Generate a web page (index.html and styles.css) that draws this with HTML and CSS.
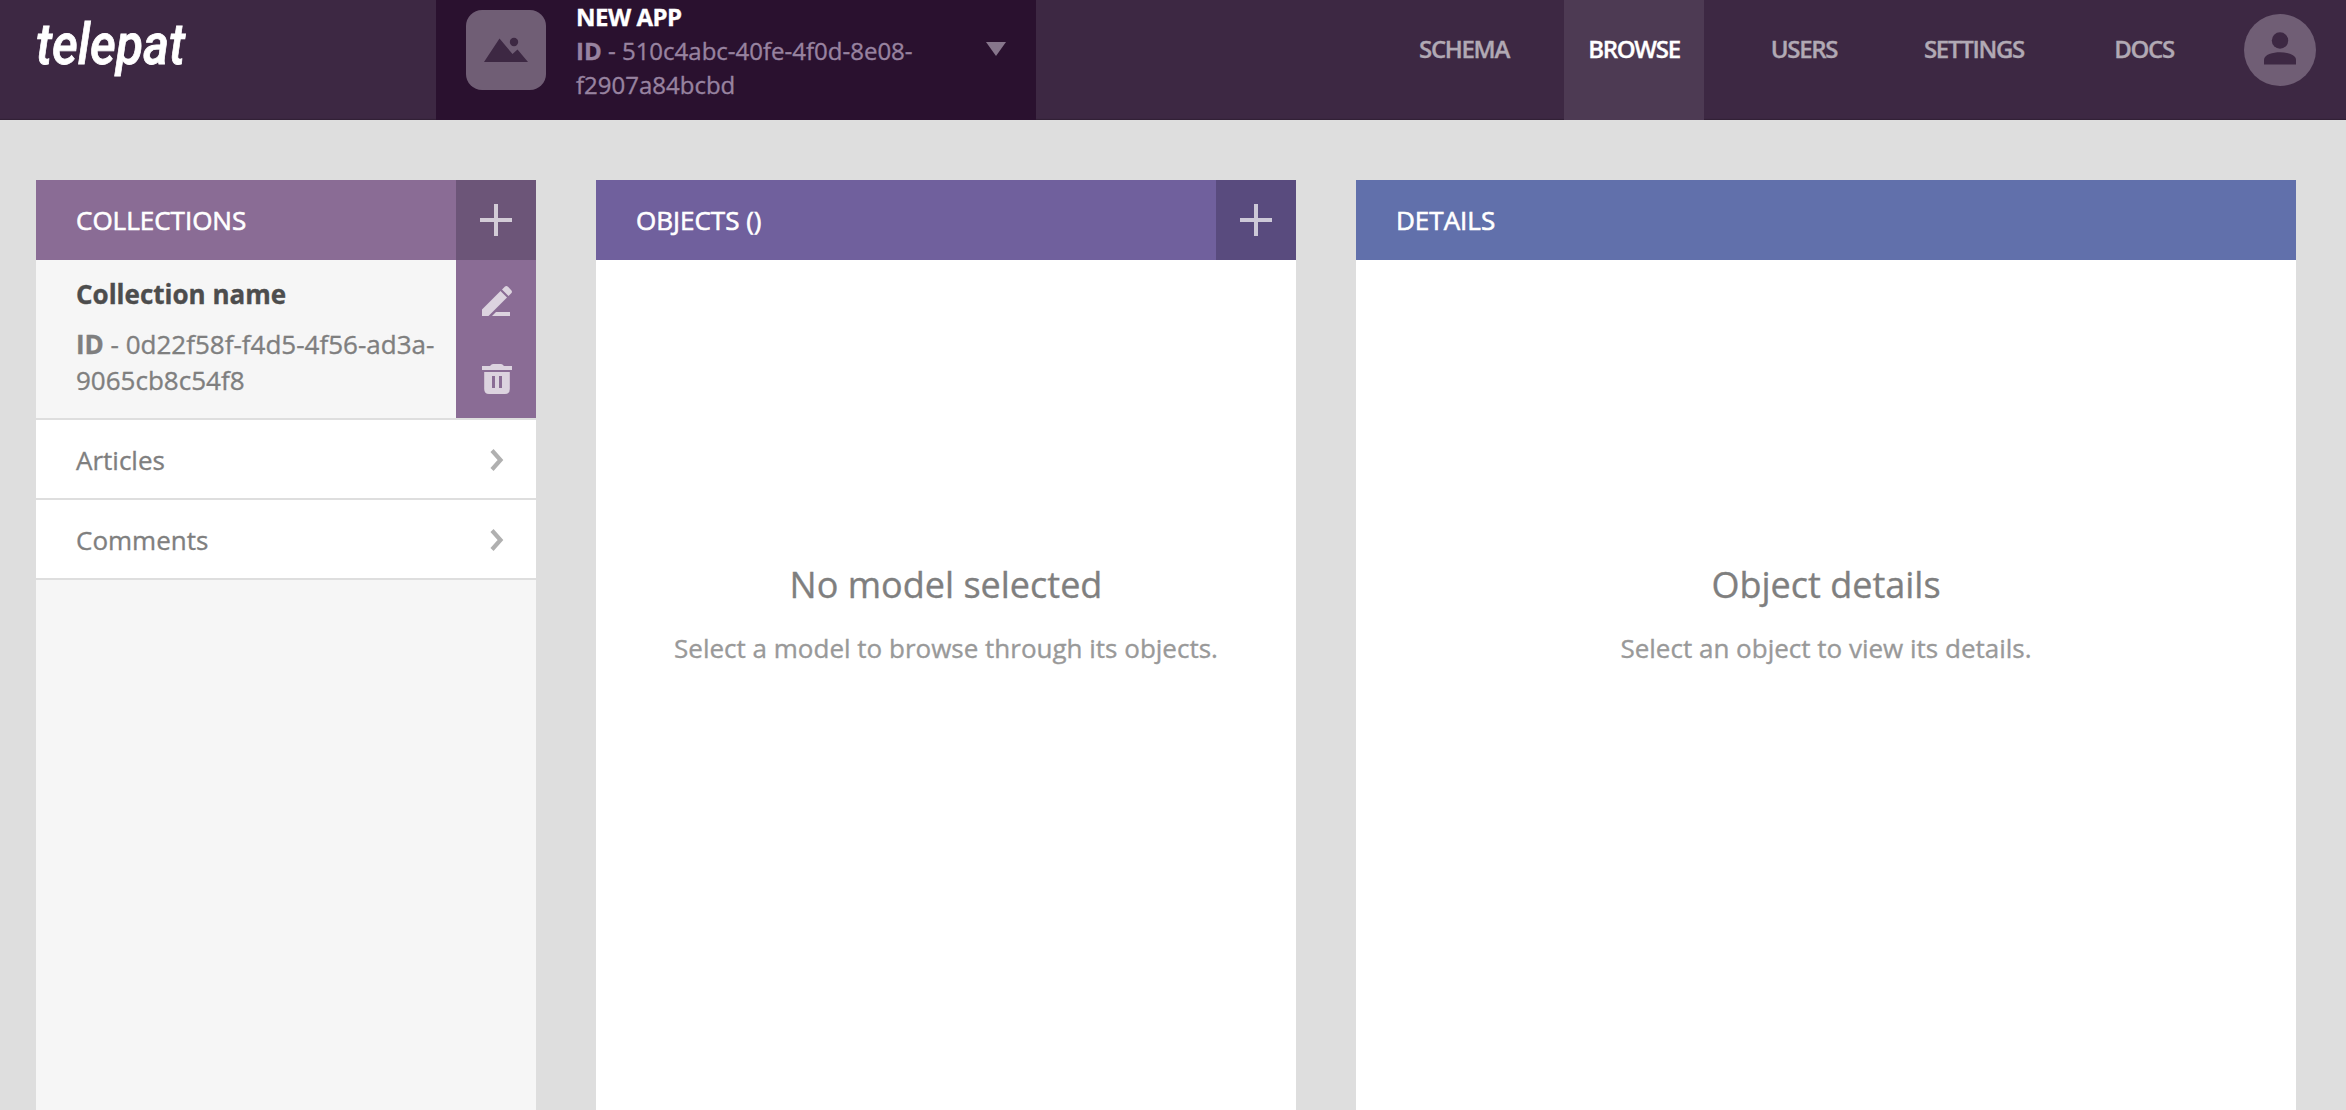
FILE: index.html
```html
<!DOCTYPE html>
<html lang="en">
<head>
<meta charset="utf-8">
<title>Telepat - Browse</title>
<link rel="stylesheet" href="styles.css">
</head>
<body>
<header class="topbar">
  <div class="brand">
    <svg class="logo" viewBox="0 0 170 100" role="img" aria-label="telepat">
      <text class="logo-text" x="1" y="64" textLength="149" lengthAdjust="spacingAndGlyphs">telepat</text>
    </svg>
  </div>
  <div class="app">
    <div class="app-icon">
      <svg width="44" height="26" viewBox="0 0 44 26"><path d="M0 25 15.500 1.500 28.500 17 33.500 12.500 44 25z"/><circle cx="30" cy="5" r="4.200"/></svg>
    </div>
    <div class="app-info">
      <div class="app-name">NEW APP</div>
      <div class="app-id"><b>ID</b> - 510c4abc-40fe-4f0d-8e08-f2907a84bcbd</div>
    </div>
    <svg class="caret" width="20" height="14" viewBox="0 0 20 14"><path d="M0 0H20L10 14z"/></svg>
  </div>
  <nav class="nav">
    <a class="nav-item">SCHEMA</a>
    <a class="nav-item active">BROWSE</a>
    <a class="nav-item">USERS</a>
    <a class="nav-item">SETTINGS</a>
    <a class="nav-item">DOCS</a>
  </nav>
  <div class="avatar">
    <svg width="32" height="33" viewBox="0 0 32 33"><circle cx="16" cy="8.500" r="8.200"/><path d="M0 32.500V28C0 22.500 9 20.300 16 20.300S32 22.500 32 28V32.500z"/></svg>
  </div>
</header>
<main class="columns">
  <section class="panel collections">
    <div class="panel-head">
      <h2 class="panel-title">COLLECTIONS</h2>
      <button class="add"><svg width="32" height="32" viewBox="0 0 32 32"><path d="M14 0h4v14h14v4H18v14h-4V18H0v-4h14z"/></svg></button>
    </div>
    <div class="current">
      <div class="current-info">
        <div class="current-name">Collection name</div>
        <div class="current-id"><b>ID</b> - 0d22f58f-f4d5-4f56-ad3a-9065cb8c54f8</div>
      </div>
      <div class="actions">
        <svg width="30" height="30" viewBox="0 0 30 30"><path d="M0 30V23.500L18.500 5 25 11.500 6.500 30zM20 3.500 23 .5Q24.500-.5 26 .8L29.300 4.200Q30.500 5.500 29.500 7L26.500 10zM10 30 14 26H28V30z"/></svg>
        <svg width="30" height="30" viewBox="0 0 30 30"><path fill-rule="evenodd" d="M0 2H8Q9.500 0 11 0H19Q20.500 0 22 2H30V6H0zM2.200 8H27.800V25Q27.800 30 23 30H7Q2.200 30 2.200 25zM10 12V24H13V12zM17 12V24H20V12z"/></svg>
      </div>
    </div>
    <a class="row">Articles<svg width="14" height="24" viewBox="0 0 14 24"><path d="M2 2.500 10.500 12 2 21.500"/></svg></a>
    <a class="row">Comments<svg width="14" height="24" viewBox="0 0 14 24"><path d="M2 2.500 10.500 12 2 21.500"/></svg></a>
  </section>
  <section class="panel objects">
    <div class="panel-head">
      <h2 class="panel-title">OBJECTS ()</h2>
      <button class="add"><svg width="32" height="32" viewBox="0 0 32 32"><path d="M14 0h4v14h14v4H18v14h-4V18H0v-4h14z"/></svg></button>
    </div>
    <div class="empty">
      <h3 class="empty-title">No model selected</h3>
      <p class="empty-text">Select a model to browse through its objects.</p>
    </div>
  </section>
  <section class="panel details">
    <div class="panel-head"><h2 class="panel-title">DETAILS</h2></div>
    <div class="empty">
      <h3 class="empty-title">Object details</h3>
      <p class="empty-text">Select an object to view its details.</p>
    </div>
  </section>
</main>
</body>
</html>
```
FILE: styles.css
```css
* { box-sizing: border-box; }

body {
  margin: 0;
  height: 1110px;
  overflow: hidden;
  display: flex;
  flex-direction: column;
  background: #dedede;
  color: #7f7f7f;
  font: 26px/36px "Open Sans", sans-serif;
  -webkit-text-stroke: .35px;
}

svg { display: block; flex: none; }

.topbar {
  display: flex;
  flex: none;
  height: 120px;
  padding-right: 30px;
  background: #3d2843;
  box-shadow: inset 0 -2px 1px -1px rgba(0, 0, 0, .2);
}

.brand { width: 436px; padding-left: 35px; }
.logo { width: 170px; height: 100px; }
.logo-text {
  font: italic 500 57px Roboto, sans-serif;
  fill: #fff;
  stroke: #fff;
  stroke-width: .8px;
}

.app {
  display: flex;
  width: 600px;
  padding: 0 30px;
  background: #2a112f;
  color: #9883a0;
  font-size: 24px;
  line-height: 34px;
}
.app-icon {
  display: flex;
  align-items: center;
  justify-content: center;
  width: 80px;
  height: 80px;
  margin: 10px 30px 0 0;
  border-radius: 16px;
  background: #705e75;
  fill: #3d2843;
}
.app-info { width: 360px; }
.app-name { color: #fff; font-weight: 700; letter-spacing: -.5px; }
.caret { margin: 42px 0 0 auto; fill: #87768c; }

.nav { display: flex; gap: 30px; margin-left: auto; }
.nav-item {
  width: 140px;
  line-height: 98px;
  text-align: center;
  color: #b1a9b4;
  font-size: 24px;
  font-weight: 600;
  letter-spacing: -1.3px;
}
.nav-item.active { background: #4d3a53; color: #fff; }

.avatar {
  display: flex;
  align-items: center;
  justify-content: center;
  width: 72px;
  height: 72px;
  margin: 14px 0 0 30px;
  padding-bottom: 4px;
  border-radius: 50%;
  background: #705e75;
  fill: #3d2843;
}

.columns {
  display: grid;
  grid-template-columns: 500px 700px 940px;
  gap: 60px;
  flex: 1;
  padding: 60px 0 0 36px;
}
.panel { background: #fff; }
.collections { background: #f6f6f6; }

.panel-head {
  display: flex;
  justify-content: space-between;
  height: 80px;
  padding-left: 40px;
  color: #fff;
}
.collections .panel-head { background: #8a6c95; }
.objects .panel-head { background: #70609d; }
.details .panel-head { background: #6170ab; }
.panel-title { margin: 0; font-size: 26px; font-weight: 400; line-height: 80px; -webkit-text-stroke: .6px; }

.add {
  display: flex;
  align-items: center;
  justify-content: center;
  width: 80px;
  padding: 0;
  border: 0;
}
.collections .add { background: #6c5578; fill: #d3ccd7; }
.objects .add { background: #594b7e; fill: #cdc9d8; }

.current {
  display: flex;
  height: 160px;
  border-bottom: 2px solid #dedede;
}
.current-info { width: 420px; padding: 16px 20px 0 40px; }
.current-name { margin-bottom: 14px; color: #4d4d4d; font-weight: 700; }
.actions {
  display: flex;
  flex-direction: column;
  align-items: center;
  gap: 48px;
  width: 80px;
  padding: 26px 0 0 2px;
  background: #8a6c95;
  fill: #dcd3df;
}

.row {
  display: flex;
  align-items: center;
  justify-content: space-between;
  height: 80px;
  padding: 2px 32px 0 40px;
  border-bottom: 2px solid #dedede;
  background: #fff;
}
.row path { fill: none; stroke: #b0b0b0; stroke-width: 4.2; }

.empty { padding-top: 301px; text-align: center; }
.empty-title { margin: 0 0 21px; font-size: 36px; font-weight: 400; line-height: 48px; }
.empty-text { margin: 0; color: #999; }
```
